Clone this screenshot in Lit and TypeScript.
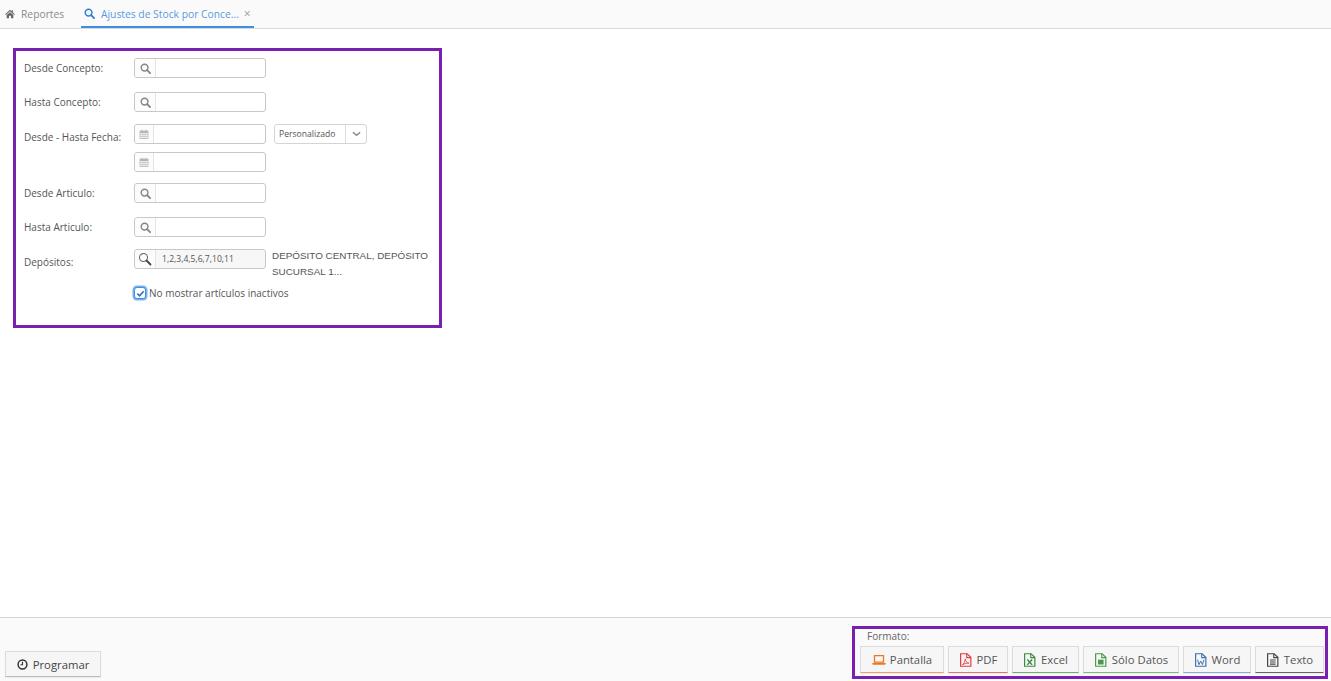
import { LitElement, html, css, svg } from "lit";
import { customElement } from "lit/decorators.js";

const searchIcon = html`<svg class="ic" viewBox="0 0 12 12" width="11" height="11"><circle cx="5" cy="5" r="3.700" fill="none" stroke="currentColor" stroke-width="1.600"/><path d="M7.800 7.800 L11 11" stroke="currentColor" stroke-width="2" stroke-linecap="round"/></svg>`;
const calIcon = html`<svg class="ic" viewBox="0 0 10 10" width="10" height="10"><path d="M1 2h8v7.500H1z" fill="none" stroke="currentColor" stroke-width=".8"/><path d="M1 2h8v2H1z" fill="currentColor"/><path d="M1 5.500h8M1 7.500h8M3.300 4v5.500M5 4v5.500M6.700 4v5.500" stroke="currentColor" stroke-width=".5"/><path d="M3 .8v1.600M7 .8v1.600" stroke="currentColor" stroke-width=".9"/></svg>`;
const fileBase = (inner: unknown) => svg`<path d="M1.500 .7h6L11 4v8.300H1.500z" fill="none" stroke="currentColor" stroke-width="1.100"/><path d="M7.200 .7v3.600H11" fill="none" stroke="currentColor" stroke-width="1"/>${inner}`;
const icons: Record<string, unknown> = {
  laptop: svg`<path d="M2.300 2.500h8.400v6H2.300z" fill="none" stroke="currentColor" stroke-width="1.200"/><path d="M.3 9.200h12.400v.8a1 1 0 0 1-1 1H1.300a1 1 0 0 1-1-1z" fill="currentColor"/>`,
  pdf: fileBase(svg`<path d="M3.200 11c1.300-1 2.500-3.200 2.600-5.500.4 2 1.400 3.300 3.400 4-2.200-.2-4.200.3-6 1.500z" fill="none" stroke="currentColor" stroke-width=".8"/>`),
  excel: fileBase(svg`<path d="M4 6 8.500 11M8.500 6 4 11" stroke="currentColor" stroke-width="1.300"/>`),
  data: fileBase(svg`<path d="M3.700 6.200h5.200v4.500H3.700z" fill="currentColor"/>`),
  word: fileBase(svg`<path d="M3.300 6.200 4.600 10.800 6.200 7.500 7.800 10.800 9.200 6.200" fill="none" stroke="currentColor" stroke-width=".9"/>`),
  text: fileBase(svg`<path d="M3.700 6.500h5.200M3.700 8.400h5.200M3.700 10.300h5.200" stroke="currentColor" stroke-width="1"/>`),
};

@customElement("app-root")
export class AppRoot extends LitElement {
  static styles = css`
    :host { display: flex; flex-direction: column; height: 100vh; font-family: "Open Sans", sans-serif; color: #555; background: #fff; overflow: hidden; }
    .ic { display: block; flex: none; }
    .tabs { display: flex; height: 29px; box-sizing: border-box; background: #fafafa; border-bottom: 1px solid #d9d9d9; padding-left: 5px; font-size: 10.300px; flex: none; }
    .tab { display: flex; align-items: center; height: 28px; color: #8a8a8a; white-space: nowrap; box-sizing: border-box; }
    .tab.home { width: 76px; gap: 6px; }
    .tab.home svg { color: #666; }
    .tab.active { width: 173px; color: #5a9be0; border-bottom: 2px solid #3f8fe0; padding-left: 3px; padding-top: 1px; }
    .tab.active svg { color: #2f7fd6; margin-right: 6px; }
    .close { color: #9a9a9a; margin-left: 5px; font-size: 12px; }
    .main { flex: 1; padding: 19px 13px; }
    .panel { width: 429px; height: 280px; box-sizing: border-box; border: 3px solid #7a1fb0; padding: 7px 4px 0 8px; font-size: 10px; }
    .row { display: flex; align-items: center; }
    .row.g14 { margin-bottom: 14px; }
    .row.g12 { margin-bottom: 12px; }
    .row.g11 { margin-bottom: 11px; }
    .row.g8 { margin-bottom: 8px; }
    .label { width: 110px; flex: none; color: #555; }
    .label.low { padding-top: 6px; }
    .input { display: flex; width: 132px; height: 20px; box-sizing: border-box; border: 1px solid #c8c8c8; border-radius: 3px; background: #fff; flex: none; }
    .addon { width: 20px; flex: none; display: flex; align-items: center; justify-content: center; border-right: 1px solid #e4e4e4; color: #858585; border-radius: 3px 0 0 3px; background: #fcfcfc; }
    .addon.cal { color: #b5b5b5; width: 18px; }
    .input.filled { background: #f7f7f7; }
    .value { padding-left: 6px; line-height: 18px; font-size: 8.600px; color: #555; }
    .select { display: flex; width: 93px; height: 20px; margin-left: 8px; box-sizing: border-box; border: 1px solid #d4d4d4; border-radius: 3px; font-size: 8.600px; align-items: center; }
    .select span { flex: 1; padding-left: 4px; }
    .select i { width: 20px; height: 18px; border-left: 1px solid #ddd; display: flex; align-items: center; justify-content: center; color: #888; }
    .desc { font-family: "Liberation Sans", sans-serif; font-size: 9.900px; line-height: 16px; color: #555; margin-left: 6px; width: 166px; flex: none; margin-top: -1px; }
    .dep { align-items: flex-start; }
    .dep .label { padding-top: 6px; }
    .check { display: flex; align-items: center; margin-left: 110px; margin-top: 6px; font-size: 10px; gap: 3px; }
    .box { width: 12px; height: 12px; box-sizing: border-box; border: 1px solid #3f8fe0; border-radius: 3px; background: #fff; box-shadow: 0 0 0 1.500px #79b2ee; color: #2d6fb8; display: flex; align-items: center; justify-content: center; }
    .footer { height: 64px; box-sizing: border-box; flex: none; background: #fafafa; border-top: 1px solid #d5d5d5; display: flex; justify-content: space-between; align-items: flex-end; padding: 0 3px 2px 5px; }
    .btn { display: flex; align-items: center; justify-content: center; gap: 4px; box-sizing: border-box; height: 27px; background: #f6f6f6; border: 1px solid #dcdcdc; border-bottom: 1px solid #bbb; font-size: 11.300px; color: #555; box-shadow: 0 1px 1px rgba(0,0,0,.05); }
    .prog { width: 96px; height: 26px; margin-bottom: 2px; color: #444; gap: 5px; }
    .prog svg { color: #333; }
    .format { width: 476px; height: 53px; box-sizing: border-box; border: 3px solid #7a1fb0; padding: 0 0 0 5px; }
    .format-label { font-size: 10px; color: #666; padding-left: 7px; line-height: 15px; margin-bottom: 2px; }
    .btns { display: flex; gap: 4px; }
    .pantalla { width: 84px; border-bottom-color: #f0a060; } .pantalla svg { color: #ee7722; }
    .pdf { width: 60px; border-bottom-color: #e57373; } .pdf svg { color: #e23b3b; }
    .excel { width: 67px; border-bottom-color: #6fae70; } .excel svg { color: #3a8a3c; }
    .data { width: 96px; border-bottom-color: #7fb97f; } .data svg { color: #4a994c; }
    .word { width: 68px; border-bottom-color: #8aa8d0; } .word svg { color: #3f6fb0; }
    .text { width: 69px; border-bottom-color: #666; } .text svg { color: #444; }
  `;

  private field(label: string, cls: string) {
    return html`<div class="row ${cls}"><div class="label">${label}</div><div class="input"><div class="addon">${searchIcon}</div></div></div>`;
  }

  private fmt(cls: string, icon: string, label: string) {
    return html`<div class="btn ${cls}"><svg class="ic" viewBox="0 0 13 13" width="14" height="14">${icons[icon]}</svg>${label}</div>`;
  }

  render() {
    return html`
      <div class="tabs">
        <div class="tab home"><svg class="ic" viewBox="0 0 12 11" width="10" height="10"><path d="M6 .5 .2 5.800l.8.800L6 2.200l5 4.400.8-.800L9.500 3.700V1H8v1.300zM2 6.800 6 3.300l4 3.500V10.500H7.200V7.500H4.800v3H2z" fill="currentColor"/></svg>Reportes</div>
        <div class="tab active">${searchIcon}Ajustes de Stock por Conce...<span class="close">×</span></div>
      </div>
      <div class="main">
        <div class="panel">
          ${this.field("Desde Concepto:", "g14")}
          ${this.field("Hasta Concepto:", "g12")}
          <div class="row g8">
            <div class="label low">Desde - Hasta Fecha:</div>
            <div class="input"><div class="addon cal">${calIcon}</div></div>
            <div class="select"><span>Personalizado</span><i><svg viewBox="0 0 10 6" width="9" height="6"><path d="M1 1l4 3.500L9 1" fill="none" stroke="currentColor" stroke-width="1.500"/></svg></i></div>
          </div>
          <div class="row g11">
            <div class="label"></div>
            <div class="input"><div class="addon cal">${calIcon}</div></div>
          </div>
          ${this.field("Desde Articulo:", "g14")}
          ${this.field("Hasta Articulo:", "g12")}
          <div class="row dep">
            <div class="label">Depósitos:</div>
            <div class="input filled"><div class="addon"><svg class="ic" viewBox="0 0 14 14" width="14" height="14"><circle cx="5.500" cy="5.500" r="4" fill="#fff" stroke="#666" stroke-width="1.100"/><path d="M3 3.500a3 3 0 0 1 2-1" fill="none" stroke="#aaa" stroke-width=".8"/><path d="M8.500 8.500 12.500 12.500" stroke="#444" stroke-width="1.800" stroke-linecap="round"/></svg></div><div class="value">1,2,3,4,5,6,7,10,11</div></div>
            <div class="desc">DEPÓSITO CENTRAL, DEPÓSITO SUCURSAL 1...</div>
          </div>
          <div class="check"><div class="box"><svg viewBox="0 0 10 10" width="9" height="9"><path d="M1.500 5.200 4 7.500 8.500 2.500" fill="none" stroke="currentColor" stroke-width="1.800"/></svg></div>No mostrar artículos inactivos</div>
        </div>
      </div>
      <div class="footer">
        <div class="btn prog"><svg class="ic" viewBox="0 0 12 12" width="11" height="11"><circle cx="6" cy="6" r="4.800" fill="none" stroke="currentColor" stroke-width="1.600"/><path d="M6 3v3.300H3.800" fill="none" stroke="currentColor" stroke-width="1.200"/></svg>Programar</div>
        <div class="format">
          <div class="format-label">Formato:</div>
          <div class="btns">
            ${this.fmt("pantalla", "laptop", "Pantalla")}
            ${this.fmt("pdf", "pdf", "PDF")}
            ${this.fmt("excel", "excel", "Excel")}
            ${this.fmt("data", "data", "Sólo Datos")}
            ${this.fmt("word", "word", "Word")}
            ${this.fmt("text", "text", "Texto")}
          </div>
        </div>
      </div>
    `;
  }
}
